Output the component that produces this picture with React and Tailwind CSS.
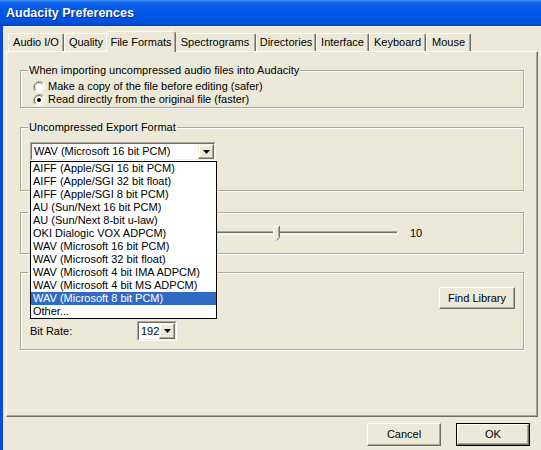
import React from 'react';

const tabs = [
  { label: 'Audio I/O', w: 'w-[56px]' },
  { label: 'Quality', w: 'w-[44px]' },
  { label: 'File Formats', w: 'w-[70px]', active: true },
  { label: 'Spectrograms', w: 'w-[82px]' },
  { label: 'Directories', w: 'w-[60px]' },
  { label: 'Interface', w: 'w-[53px]' },
  { label: 'Keyboard', w: 'w-[57px]' },
  { label: 'Mouse', w: 'w-[45px]' },
];

const formats = [
  'AIFF (Apple/SGI 16 bit PCM)',
  'AIFF (Apple/SGI 32 bit float)',
  'AIFF (Apple/SGI 8 bit PCM)',
  'AU (Sun/Next 16 bit PCM)',
  'AU (Sun/Next 8-bit u-law)',
  'OKI Dialogic VOX ADPCM)',
  'WAV (Microsoft 16 bit PCM)',
  'WAV (Microsoft 32 bit float)',
  'WAV (Microsoft 4 bit IMA ADPCM)',
  'WAV (Microsoft 4 bit MS ADPCM)',
  'WAV (Microsoft 8 bit PCM)',
  'Other...',
];

const Tab = ({ label, w, active }) => {
  if (active) {
    return (
      <div className={`${w} relative z-10 -mx-[2px] -mb-[1px] h-[21px] flex items-center justify-center bg-[#ECE9D8] border-t border-l border-white border-r border-r-[#716F64] rounded-t-[3px] shadow-[inset_-1px_0_0_#ACA899]`}>
        {label}
      </div>
    );
  }
  return (
    <div className={`${w} h-[18px] flex items-center justify-center border-t border-l border-white border-r border-r-[#716F64] rounded-t-[2px] shadow-[inset_-1px_0_0_#ACA899]`}>
      {label}
    </div>
  );
};

// groups 3 and 4 have their captions hidden under the open list, so the legend is left empty
const Group = ({ title, className, children }) => (
  <fieldset className={`border border-[#ACA899] shadow-[1px_1px_0_#fff,inset_1px_1px_0_#fff] pl-[9px] ${className}`}>
    <legend className={`-ml-[2px] px-[1px] leading-[13px] h-[13px] ${title ? 'bg-[#ECE9D8]' : 'w-[80px]'}`}>{title}</legend>
    {children}
  </fieldset>
);

const Radio = ({ checked, label }) => (
  <div className="h-[13px] flex items-center gap-[3px] ml-[3px]">
    <svg width="12" height="12" viewBox="0 0 12 12">
      <path d="M10.2 1.8 A6 6 0 0 0 1.8 10.2" fill="none" stroke="#ACA899" strokeWidth="1" />
      <path d="M1.8 10.2 A6 6 0 0 0 10.2 1.8" fill="none" stroke="#fff" strokeWidth="1" />
      <circle cx="6" cy="6" r="4.5" fill="#fff" />
      <path d="M9.2 2.8 A4.5 4.5 0 0 0 2.8 9.2" fill="none" stroke="#716F64" strokeWidth="1" />
      <path d="M2.8 9.2 A4.5 4.5 0 0 0 9.2 2.8" fill="none" stroke="#F1EFE2" strokeWidth="1" />
      {checked && <circle cx="6" cy="6" r="2" fill="#000" />}
    </svg>
    <span>{label}</span>
  </div>
);

const ArrowButton = () => (
  <div className="w-[16px] h-full flex items-center justify-center bg-[#ECE9D8] border border-t-[#F1EFE2] border-l-[#F1EFE2] border-r-[#716F64] border-b-[#716F64] shadow-[inset_-1px_-1px_0_#ACA899,inset_1px_1px_0_#fff]">
    <svg width="7" height="4" viewBox="0 0 7 4">
      <path d="M0 0 H7 L3.5 4 Z" fill="#000" />
    </svg>
  </div>
);

const Combo = ({ value, width, height, children }) => (
  <div className={`relative ${width} ${height} bg-white border border-t-[#ACA899] border-l-[#ACA899] border-b-white border-r-white`}>
    <div className="h-full flex items-center border border-t-[#716F64] border-l-[#716F64] border-b-[#F1EFE2] border-r-[#F1EFE2]">
      <span className="flex-1 pl-[2px] whitespace-nowrap overflow-hidden">{value}</span>
      <ArrowButton />
    </div>
    {children}
  </div>
);

const Button = ({ label, isDefault }) => {
  if (isDefault) {
    return (
      <div className="w-[74px] h-[23px] border border-black">
        <div className="w-full h-full flex items-center justify-center border border-t-white border-l-white border-r-[#716F64] border-b-[#716F64] shadow-[inset_-1px_-1px_0_#ACA899]">
          {label}
        </div>
      </div>
    );
  }
  return (
    <div className="w-[74px] h-[23px] flex items-center justify-center border border-t-white border-l-white border-r-[#716F64] border-b-[#716F64] shadow-[inset_-1px_-1px_0_#ACA899]">
      {label}
    </div>
  );
};

const App = () => {
  return (
    <div className="w-[541px] h-[450px] overflow-hidden bg-[#ECE9D8] flex flex-col text-[11px] leading-[13px] text-black font-['Liberation_Sans',Arial,sans-serif]">
      {/* title bar */}
      <div className="h-[26px] shrink-0 flex items-center pl-[6px] text-white font-bold text-[12.5px] [text-shadow:1px_1px_0_#0A2A8A] bg-[linear-gradient(to_bottom,#3D8DF7_0%,#1466EE_10%,#0058E6_35%,#0054E3_75%,#0047C8_100%)]">
        Audacity Preferences
      </div>

      <div className="flex-1 min-h-0 flex flex-col border-l-[3px] border-[#0A4BDC] pl-[3px] pt-[5px]">
        <div className="h-[20px] flex items-end pl-[2px]">
          {tabs.map((t) => (
            <Tab key={t.label} {...t} />
          ))}
        </div>

        <div className="mr-[3px] h-[366px] shrink-0 flex flex-col px-[13px] bg-[#ECE9D8] border border-white border-r-[#716F64] border-b-[#716F64] shadow-[inset_-1px_-1px_0_#ACA899]">
          <Group title="When importing uncompressed audio files into Audacity" className="mt-[12px] pb-[1px]">
            <div className="pt-[3px]">
              <Radio label="Make a copy of the file before editing (safer)" />
              <Radio checked label="Read directly from the original file (faster)" />
            </div>
          </Group>

          <Group title="Uncompressed Export Format" className="mt-[13px] pb-[29px] relative z-20">
            <div className="mt-[8px]">
              <Combo value="WAV (Microsoft 16 bit PCM)" width="w-[186px]" height="h-[19px]">
                <div className="absolute -left-[1px] top-[18px] w-[187px] h-[158px] bg-white border border-black">
                  {formats.map((f, i) => (
                    <div
                      key={f}
                      className={`h-[13px] leading-[13px] pl-[2px] whitespace-nowrap ${i === 10 ? 'bg-[#316AC5] text-white' : ''}`}
                    >
                      {f}
                    </div>
                  ))}
                </div>
              </Combo>
            </div>
          </Group>

          <Group className="mt-[15px] pb-[8px]">
            <div className="mt-[2px] h-[24px] flex items-center">
              <span className="w-[107px]" />
              <div className="relative w-[261px] h-[24px] flex items-center">
                <div className="w-full h-[4px] border border-t-[#ACA899] border-l-[#ACA899] border-b-white border-r-white shadow-[inset_1px_1px_0_#716F64]" />
                <svg className="absolute left-[136px] top-[5px]" width="8" height="15" viewBox="0 0 8 15">
                  <path d="M0 0 H7 V11 L3.5 14.5 L0 11 Z" fill="#ECE9D8" />
                  <path d="M0.5 11 V0.5 H6.5" fill="none" stroke="#fff" />
                  <path d="M0.5 11 L3.5 14" fill="none" stroke="#fff" />
                  <path d="M6.5 0 V11 L3.5 14.5" fill="none" stroke="#716F64" />
                  <path d="M5.5 1 V10.5" fill="none" stroke="#ACA899" />
                </svg>
              </div>
              <span className="ml-[12px]">10</span>
            </div>
          </Group>

          <Group className="mt-[12px] pb-[8px]">
            <div className="mt-[8px] h-[22px] flex items-center justify-end pr-[8px]">
              <div className="w-[76px] h-[22px] flex items-center justify-center border border-t-white border-l-white border-r-[#716F64] border-b-[#716F64] shadow-[inset_-1px_-1px_0_#ACA899]">
                Find Library
              </div>
            </div>
            <div className="mt-[12px] flex items-center">
              <span className="w-[107px]">Bit Rate:</span>
              <Combo value="192" width="w-[40px]" height="h-[20px]" />
            </div>
          </Group>
        </div>

        <div className="mt-[6px] flex justify-end gap-[15px] pr-[11px]">
          <Button label="Cancel" />
          <Button label="OK" isDefault />
        </div>
      </div>
    </div>
  );
};

export default App;
